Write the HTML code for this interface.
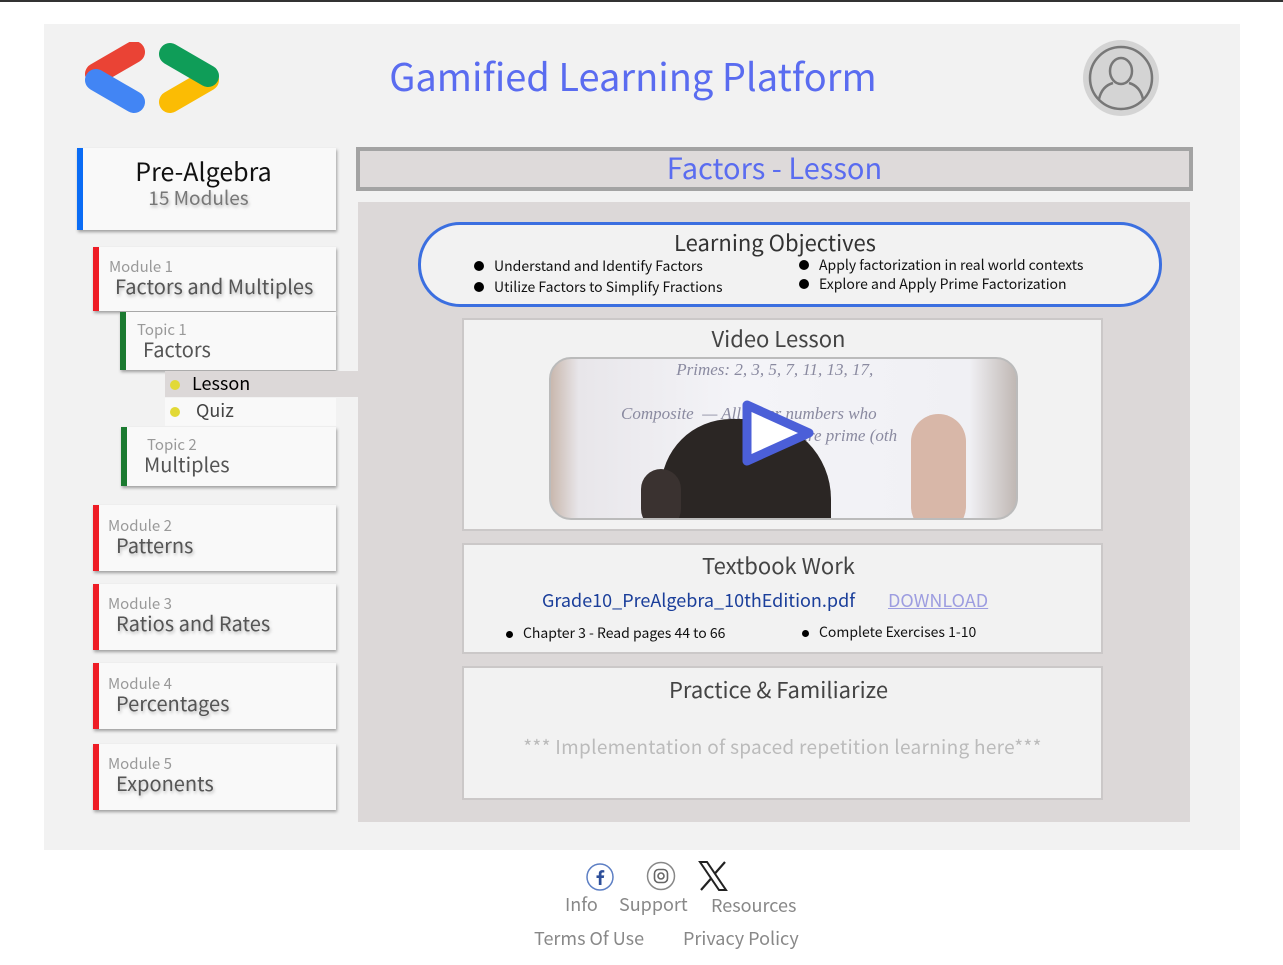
<!DOCTYPE html>
<html><head><meta charset="utf-8"><style>
*{box-sizing:border-box;margin:0;padding:0}
body{width:1283px;height:965px;background:#fff;font-family:"Noto Sans CJK KR","Liberation Sans",sans-serif;position:relative;overflow:hidden}
.a{position:absolute}
.main{left:44px;top:24px;width:1196px;height:826px;background:#f2f2f2}
.card{background:#f9f9f9;box-shadow:1px 2px 3px rgba(0,0,0,.35)}
.sm{color:#999;font-size:15px;line-height:17px}
.lg{color:#555;font-size:20px;line-height:22px;text-shadow:1px 2px 3px rgba(0,0,0,.25)}
.box{background:#f2f2f2;border:2px solid #cbc8c8}
.h{font-size:22px;color:#444;text-align:center}
.dot{display:inline-block;width:10px;height:10px;border-radius:50%;background:#000;margin-right:10px}
.li{font-size:14px;color:#111}
.ft{color:#888;font-size:18px}
</style></head><body>
<div class="a" style="left:0;top:0;width:1283px;height:2px;background:#333"></div>
<div class="a main"></div>
<svg class="a" style="left:84px;top:42px" width="136" height="72" viewBox="0 0 136 72">
<line x1="50" y1="10" x2="12" y2="32" stroke="#ea4335" stroke-width="22" stroke-linecap="round"/>
<line x1="12" y1="38" x2="50" y2="60" stroke="#4285f4" stroke-width="22" stroke-linecap="round"/>
<line x1="86" y1="60" x2="124" y2="38" stroke="#fbbc04" stroke-width="22" stroke-linecap="round"/>
<line x1="86" y1="12" x2="124" y2="34" stroke="#0f9d58" stroke-width="22" stroke-linecap="round"/>
</svg>
<div class="a" style="left:340px;top:50px;width:586px;text-align:center;font-size:38px;color:#5a6cf0;line-height:50px">Gamified Learning Platform</div>
<svg class="a" style="left:1082px;top:39px" width="78" height="78" viewBox="0 0 78 78">
<circle cx="39" cy="39" r="38" fill="#d4d4d4"/><circle cx="39" cy="39" r="31" fill="none" stroke="#777" stroke-width="2.5"/>
<ellipse cx="39" cy="32" rx="11" ry="13" fill="none" stroke="#777" stroke-width="2.5"/>
<path d="M17 60 Q20 47 31 44 M61 60 Q58 47 47 44" fill="none" stroke="#777" stroke-width="2.5"/>
</svg>

<div class="a card" style="left:77px;top:148px;width:259px;height:82px;border-left:6px solid #0a6cf5;text-align:center">
<div style="font-size:25px;color:#111;margin-top:7px;line-height:32px;margin-left:-12px">Pre-Algebra</div>
<div style="font-size:19px;color:#777;line-height:22px;text-shadow:1px 2px 3px rgba(0,0,0,.25);margin-left:-22px">15 Modules</div></div>

<div class="a card" style="left:93px;top:247px;width:243px;height:64px;border-left:6px solid #ee1c25;padding:11px 0 0 10px"><div class="sm">Module 1</div><div class="lg" style="margin-left:6px">Factors and Multiples</div></div>
<div class="a card" style="left:120px;top:312px;width:216px;height:58px;border-left:6px solid #1b7a30;padding:9px 0 0 11px"><div class="sm">Topic 1</div><div class="lg" style="margin-left:6px;text-shadow:none">Factors</div></div>
<div class="a" style="left:165px;top:371px;width:193px;height:26px;background:#dcd8d8;font-size:18px;line-height:24px;padding-left:5px"><span class="dot" style="background:#e2d936;margin-right:12px"></span>Lesson</div>
<div class="a" style="left:165px;top:398px;width:171px;height:28px;background:#f9f9f9;font-size:18px;line-height:24px;padding-left:5px;color:#444"><span class="dot" style="background:#e2d936;margin-right:16px"></span>Quiz</div>
<div class="a card" style="left:121px;top:427px;width:215px;height:59px;border-left:6px solid #1b7a30;padding:9px 0 0 20px"><div class="sm">Topic 2</div><div class="lg" style="margin-left:-3px;text-shadow:none">Multiples</div></div>
<div class="a card" style="left:93px;top:505px;width:243px;height:66px;border-left:6px solid #ee1c25;padding:12px 0 0 9px"><div class="sm">Module 2</div><div class="lg" style="margin-left:8px">Patterns</div></div>
<div class="a card" style="left:93px;top:584px;width:243px;height:66px;border-left:6px solid #ee1c25;padding:11px 0 0 9px"><div class="sm">Module 3</div><div class="lg" style="margin-left:8px">Ratios and Rates</div></div>
<div class="a card" style="left:93px;top:663px;width:243px;height:66px;border-left:6px solid #ee1c25;padding:12px 0 0 9px"><div class="sm">Module 4</div><div class="lg" style="margin-left:8px">Percentages</div></div>
<div class="a card" style="left:93px;top:744px;width:243px;height:66px;border-left:6px solid #ee1c25;padding:11px 0 0 9px"><div class="sm">Module 5</div><div class="lg" style="margin-left:8px">Exponents</div></div>

<div class="a" style="left:356px;top:147px;width:837px;height:44px;background:#dedada;border:4px solid #a3a3a3;text-align:center;font-size:29px;line-height:32px;color:#5a6cf0">Factors - Lesson</div>
<div class="a" style="left:358px;top:202px;width:832px;height:620px;background:#dcd8d8"></div>

<div class="a" style="left:418px;top:222px;width:744px;height:85px;border:3px solid #3b6fe0;border-radius:42px;background:#f2f2f2">
<div class="h" style="font-size:22px;line-height:28px;margin-top:3px;color:#333;margin-left:-30px">Learning Objectives</div>
<div class="a li" style="left:53px;top:31px;line-height:21px"><span class="dot"></span>Understand and Identify Factors<br><span class="dot"></span>Utilize Factors to Simplify Fractions</div>
<div class="a li" style="left:378px;top:31px;line-height:19px"><span class="dot"></span>Apply factorization in real world contexts<br><span class="dot"></span>Explore and Apply Prime Factorization</div>
</div>

<div class="a box" style="left:462px;top:318px;width:641px;height:213px">
<div class="h" style="line-height:36px;margin-left:-8px">Video Lesson</div>
<div class="a" style="left:85px;top:37px;width:469px;height:163px;border-radius:22px;overflow:hidden;background:linear-gradient(90deg,#c9b8ae 0,#e8e6ea 6%,#f4f4f8 40%,#f0f0f4 90%,#c0b8b4 100%);border:2px solid #bbb">
<div class="a" style="left:70px;top:0px;width:400px;font-family:'Liberation Serif',serif;font-style:italic;color:#8a8aa0;font-size:17px;line-height:22px">&nbsp;&nbsp;&nbsp;&nbsp;&nbsp;&nbsp;&nbsp;&nbsp;&nbsp;&nbsp;&nbsp;&nbsp;&nbsp;Primes: 2, 3, 5, 7, 11, 13, 17,<br><br>Composite &nbsp;— All other numbers who<br>&nbsp;&nbsp;&nbsp;&nbsp;&nbsp;&nbsp;&nbsp;&nbsp;&nbsp;&nbsp;&nbsp;&nbsp;&nbsp;&nbsp;&nbsp;&nbsp;&nbsp;&nbsp;&nbsp;&nbsp;&nbsp;&nbsp;&nbsp;&nbsp;&nbsp;&nbsp;&nbsp;&nbsp;&nbsp;&nbsp;&nbsp;&nbsp;&nbsp;&nbsp;&nbsp;&nbsp;&nbsp;&nbsp;&nbsp;&nbsp;&nbsp;&nbsp;are prime (oth</div>
<div class="a" style="left:110px;top:60px;width:170px;height:120px;border-radius:70px 80px 0 0;background:#2b2624"></div>
<div class="a" style="left:90px;top:110px;width:40px;height:60px;border-radius:20px;background:#3a3230"></div>
<div class="a" style="left:360px;top:55px;width:55px;height:120px;border-radius:28px;background:#d8b7a8"></div>
<svg class="a" style="left:188px;top:38px" width="80" height="72" viewBox="0 0 80 72"><path d="M8 8 L70 36 L8 64 Z" fill="#fff" stroke="#4b5fd8" stroke-width="9" stroke-linejoin="round"/></svg>
</div></div>

<div class="a box" style="left:462px;top:543px;width:641px;height:111px">
<div class="h" style="line-height:40px;margin-left:-8px">Textbook Work</div>
<div class="a" style="left:78px;top:42px;font-size:18px;color:#1a3e9a">Grade10_PreAlgebra_10thEdition.pdf</div>
<div class="a" style="left:424px;top:42px;font-size:18px;color:#9d9de0;text-decoration:underline">DOWNLOAD</div>
<div class="a li" style="left:42px;top:78px"><span class="dot" style="width:7px;height:7px"></span>Chapter 3 - Read pages 44 to 66</div>
<div class="a li" style="left:338px;top:77px"><span class="dot" style="width:7px;height:7px"></span>Complete Exercises 1-10</div>
</div>

<div class="a box" style="left:462px;top:666px;width:641px;height:134px">
<div class="h" style="line-height:42px;margin-left:-8px">Practice &amp; Familiarize</div>
<div class="a" style="left:0;width:637px;top:65px;text-align:center;font-size:19px;color:#bbb;letter-spacing:.3px">*** Implementation of spaced repetition learning here***</div>
</div>

<svg class="a" style="left:585px;top:862px" width="30" height="30" viewBox="0 0 30 30"><circle cx="15" cy="15" r="13" fill="none" stroke="#5d7fc4" stroke-width="1.5"/><path d="M16.5 23v-7h2.3l.4-2.6h-2.7v-1.6c0-.8.3-1.3 1.3-1.3h1.5V8.2c-.4 0-1.2-.1-2.1-.1-2 0-3.4 1.2-3.4 3.5v1.8h-2.3V16h2.3v7z" fill="#2d4f9a"/></svg>
<svg class="a" style="left:646px;top:861px" width="30" height="30" viewBox="0 0 30 30"><circle cx="15" cy="15" r="13.5" fill="none" stroke="#888" stroke-width="1.5"/><rect x="8.5" y="8.5" width="13" height="13" rx="4" fill="none" stroke="#666" stroke-width="1.6"/><circle cx="15" cy="15" r="3" fill="none" stroke="#666" stroke-width="1.6"/></svg>
<svg class="a" style="left:698px;top:861px" width="30" height="30" viewBox="0 0 30 30"><path d="M2 1h7l19 28h-7z" fill="none" stroke="#222" stroke-width="2"/><path d="M27 1L16.5 13M3 29l10.5-12" stroke="#222" stroke-width="2.2"/></svg>
<div class="a ft" style="left:565px;top:891px">Info</div>
<div class="a ft" style="left:619px;top:891px">Support</div>
<div class="a ft" style="left:711px;top:892px">Resources</div>
<div class="a ft" style="left:534px;top:925px">Terms Of Use</div>
<div class="a ft" style="left:683px;top:925px">Privacy Policy</div>
</body></html>
